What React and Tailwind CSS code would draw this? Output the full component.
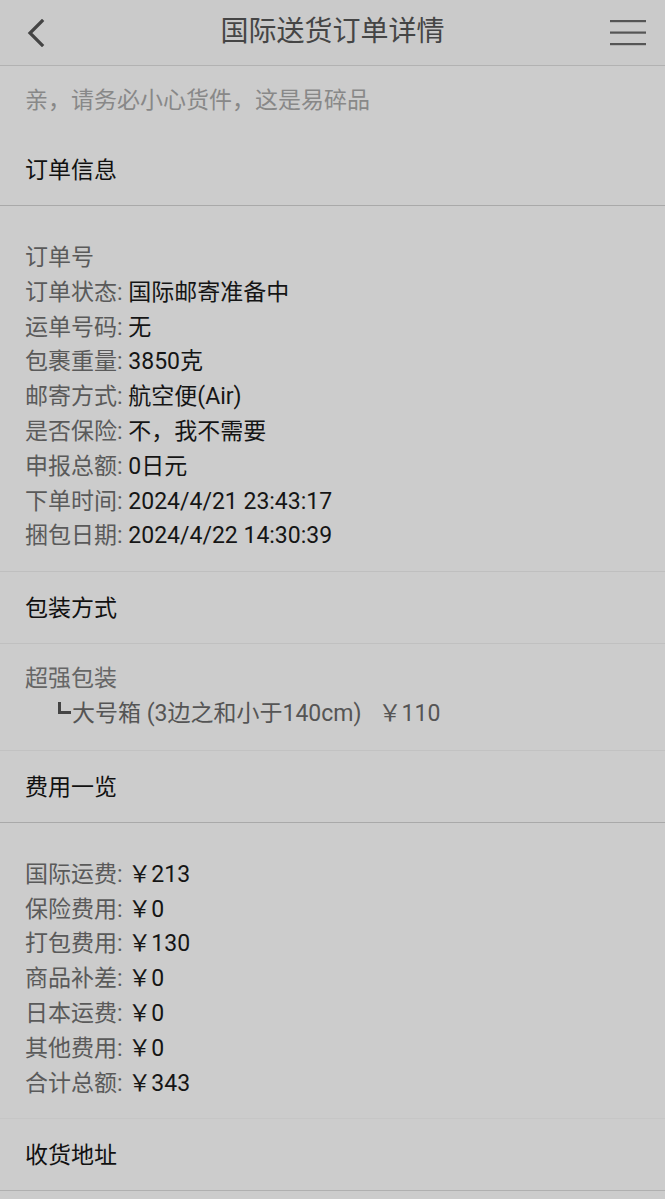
import React from 'react';

const orderInfo = [
  ['订单状态', '国际邮寄准备中'],
  ['运单号码', '无'],
  ['包裹重量', '3850克'],
  ['邮寄方式', '航空便(Air)'],
  ['是否保险', '不，我不需要'],
  ['申报总额', '0日元'],
  ['下单时间', '2024/4/21 23:43:17'],
  ['捆包日期', '2024/4/22 14:30:39'],
];

const fees = [
  ['国际运费', '￥213'],
  ['保险费用', '￥0'],
  ['打包费用', '￥130'],
  ['商品补差', '￥0'],
  ['日本运费', '￥0'],
  ['其他费用', '￥0'],
  ['合计总额', '￥343'],
];

function SectionTitle({ children, line = 'border-[#bdbdbd]' }) {
  return (
    <div className={`h-[72px] flex items-center pl-[25px] pt-[4px] text-[#111] border-b ${line}`}>
      {children}
    </div>
  );
}

function InfoRow({ label, value }) {
  return (
    <div className="h-[34.8px] flex items-center whitespace-pre">
      <span className="text-[#5a5a5a]">{label}: </span>
      <span className="text-[#151515]">{value}</span>
    </div>
  );
}

export default function App() {
  return (
    <div
      className="min-h-screen bg-[#cccccc] text-[23px] leading-[34.8px]"
      style={{ fontFamily: 'Roboto, "Noto Sans CJK SC", sans-serif' }}
    >
      {/* top bar */}
      <div className="h-[66px] flex items-center justify-between border-b border-[#b2b2b2] bg-[#cacaca]">
        <button className="w-[70px] h-full flex items-center pl-[26px]">
          <svg width="20" height="28" viewBox="0 0 20 28" fill="none">
            <path d="M16 2 L4 14 L16 26" stroke="#444" strokeWidth="3.2" strokeLinecap="square" />
          </svg>
        </button>
        <div className="text-[28px] text-[#454545]">国际送货订单详情</div>
        <button className="w-[70px] h-full flex items-center justify-end pr-[19px]">
          <svg width="36" height="26" viewBox="0 0 36 26">
            <rect x="0" y="0" width="36" height="2.2" fill="#555" />
            <rect x="0" y="11.5" width="36" height="2.2" fill="#555" />
            <rect x="0" y="23" width="36" height="2.2" fill="#555" />
          </svg>
        </button>
      </div>

      <div className="h-[68px] flex items-center pl-[25px] pt-[2px] text-[#888]">亲，请务必小心货件，这是易碎品</div>

      <SectionTitle line="border-[#a9a9a9]">订单信息</SectionTitle>
      <div className="pl-[25px] pt-[35px] pb-[17px] border-b border-[#bfbfbf]">
        <div className="h-[34.8px] flex items-center text-[#5a5a5a]">订单号</div>
        {orderInfo.map(([l, v]) => (
          <InfoRow key={l} label={l} value={v} />
        ))}
      </div>

      <SectionTitle line="border-[#c0c0c0]">包装方式</SectionTitle>
      <div className="pl-[25px] py-[18px] border-b border-[#c2c2c2]">
        <div className="h-[34.8px] flex items-center text-[#666]">超强包装</div>
        <div className="h-[34.8px] flex items-center text-[#555] whitespace-pre pl-[33px]">
          <span className="self-start mt-[5px] mr-[1px] w-[13px] h-[12px] border-l-[3px] border-b-[3px] border-[#444]" />
          大号箱 (3边之和小于140cm)   ￥110
        </div>
      </div>

      <SectionTitle line="border-[#a9a9a9]">费用一览</SectionTitle>
      <div className="pl-[25px] pt-[35px] pb-[17px] border-b border-[#c6c6c6]">
        {fees.map(([l, v]) => (
          <InfoRow key={l} label={l} value={v} />
        ))}
      </div>

      <SectionTitle line="border-[#b0b0b0]">收货地址</SectionTitle>
    </div>
  );
}
